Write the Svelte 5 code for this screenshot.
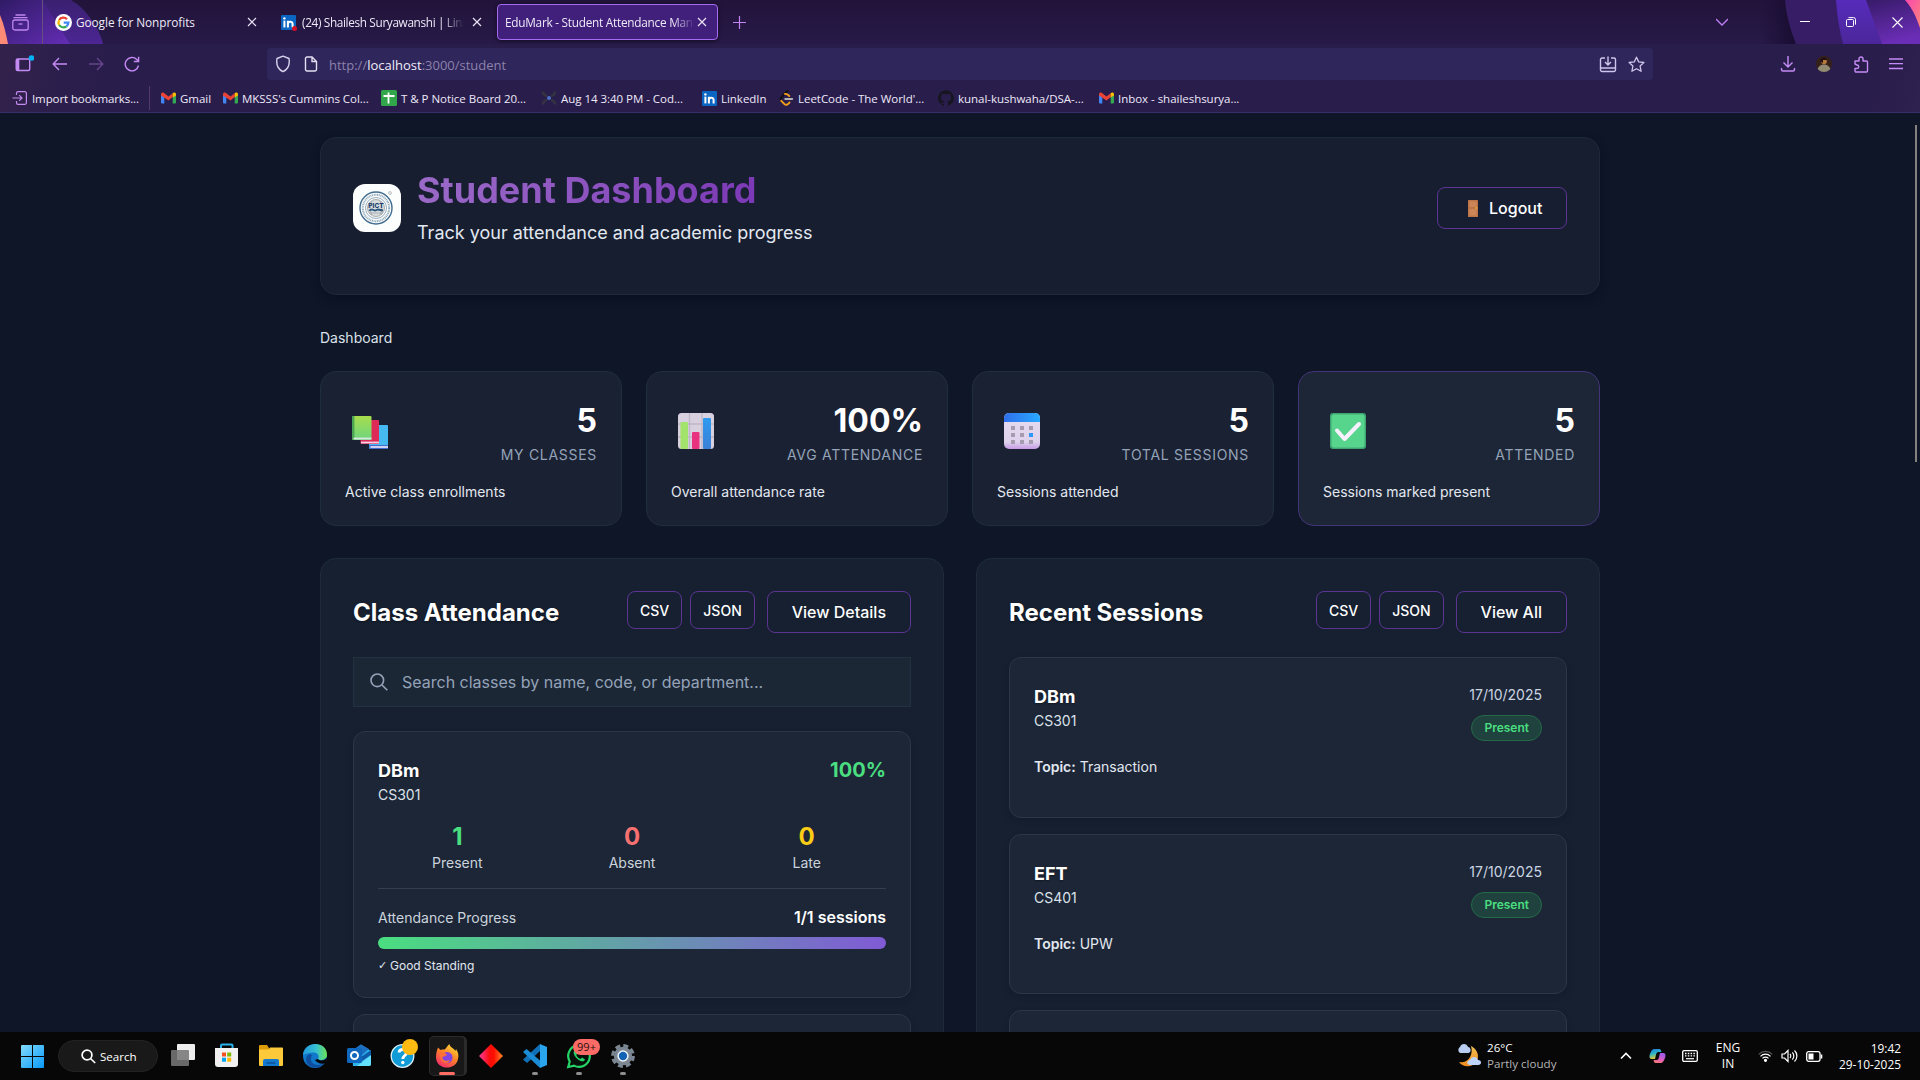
<script>
  const bookmarks = [
    { icon: 'import', label: 'Import bookmarks...', width: 137 },
    { icon: 'gmail', label: 'Gmail', width: 62 },
    { icon: 'gmail', label: "MKSSS's Cummins Col...", width: 159 },
    { icon: 'sheet', label: 'T & P Notice Board 20...', width: 160 },
    { icon: 'code', label: 'Aug 14 3:40 PM - Cod...', width: 160 },
    { icon: 'linkedin', label: 'LinkedIn', width: 77 },
    { icon: 'leetcode', label: "LeetCode - The World'...", width: 160 },
    { icon: 'github', label: 'kunal-kushwaha/DSA-...', width: 160 },
    { icon: 'gmail', label: 'Inbox - shaileshsurya...', width: 160 }
  ];

  const stats = [
    { icon: 'books', value: '5', label: 'My Classes', note: 'Active class enrollments' },
    { icon: 'chart', value: '100%', label: 'Avg Attendance', note: 'Overall attendance rate' },
    { icon: 'calendar', value: '5', label: 'Total Sessions', note: 'Sessions attended' },
    { icon: 'check', value: '5', label: 'Attended', note: 'Sessions marked present', active: true }
  ];

  const counts = [
    { value: 1, label: 'Present', tone: 'green' },
    { value: 0, label: 'Absent', tone: 'red' },
    { value: 0, label: 'Late', tone: 'yellow' }
  ];

  const sessions = [
    { name: 'DBm', code: 'CS301', date: '17/10/2025', status: 'Present', topic: 'Transaction' },
    { name: 'EFT', code: 'CS401', date: '17/10/2025', status: 'Present', topic: 'UPW' }
  ];

  const apps = ['taskview', 'store', 'explorer', 'edge', 'outlook', 'help', 'firefox', 'diamond', 'vscode', 'whatsapp', 'settings'];
  const running = ['vscode', 'whatsapp', 'settings'];
</script>

{#snippet closeIcon()}
  <svg class="close" width="10" height="10" viewBox="0 0 10 10"><path d="M1 1l8 8M9 1l-8 8" stroke="#e9e3f5" stroke-width="1.2" fill="none" /></svg>
{/snippet}

{#snippet linkedinLogo()}
  <svg width="15" height="15" viewBox="0 0 15 15">
    <rect width="15" height="15" rx="1" fill="#0a66c2" />
    <rect x="2.4" y="5.6" width="2" height="6.8" fill="#fff" /><circle cx="3.4" cy="3.4" r="1.2" fill="#fff" />
    <path d="M6.9 12.4V5.7M6.9 9c0-3 4.7-3.2 4.7 0v3.4" stroke="#fff" stroke-width="2" fill="none" />
  </svg>
{/snippet}

{#snippet bookmarkIcon(name)}
  {#if name === 'import'}
    <svg width="16" height="16" viewBox="0 0 16 16" fill="none" stroke="#c38bf0" stroke-width="1.2"><path d="M4.5 5V3.2a1.6 1.6 0 0 1 1.6-1.6h6.7a1.6 1.6 0 0 1 1.6 1.6v9.6a1.6 1.6 0 0 1-1.6 1.6H6.1a1.6 1.6 0 0 1-1.6-1.6V11M.5 8H10M7.2 5.2L10 8l-2.8 2.8" /></svg>
  {:else if name === 'gmail'}
    <svg width="15" height="12" viewBox="0 0 15 12">
      <path d="M0 2v8.5A1 1 0 0 0 1 11.5h2.3V5z" fill="#4285f4" /><path d="M15 2v8.5a1 1 0 0 1-1 1h-2.3V5z" fill="#34a853" />
      <path d="M0 2.2C0 .4 2 0 3 .9L7.5 4.6 11.7 1.2v3.9L7.5 8.5 0 3.4z" fill="#ea4335" /><path d="M11.7 1.1C13 0 15 .3 15 2.2v1.2l-3.3 2z" fill="#fbbc04" />
    </svg>
  {:else if name === 'sheet'}
    <svg width="16" height="16" viewBox="0 0 16 16"><rect width="16" height="16" rx="1.5" fill="#31a64b" /><path d="M2.5 6h11M7.5 2.5v11" stroke="#fff" stroke-width="1.8" /></svg>
  {:else if name === 'code'}
    <svg width="16" height="16" viewBox="0 0 16 16"><path d="M2 1.5C2 5 4 5.5 6 6M14 1.5C14 5 12 5.5 10 6M2 14.5C2 11 4 10.5 6 10M14 14.5C14 11 12 10.5 10 10" stroke="#343341" stroke-width="2.6" fill="none" /><circle cx="8" cy="8" r="2" fill="#4c6fc4" /></svg>
  {:else if name === 'linkedin'}
    {@render linkedinLogo()}
  {:else if name === 'leetcode'}
    <svg width="15" height="16" viewBox="0 0 15 16" fill="none" stroke-width="1.9" stroke-linecap="round"><path d="M8.5 1L2.3 7.3c-1 1.100-1 2.200 0 3.300" stroke="#111" /><path d="M2.300 10.800l2.900 3c1.300 1.300 2.700 1.300 4 0l1.300-1.300M6 4c1.500-.5 2.500.2 4.300 2" stroke="#f2a01b" /><path d="M6.200 9h7" stroke="#b3b3b3" /></svg>
  {:else}
    <svg width="16" height="16" viewBox="0 0 16 16"><path fill="#17151f" d="M8 .2a8 8 0 0 0-2.500 15.600c.4.1.5-.2.5-.4v-1.500c-2.200.5-2.700-1-2.700-1-.4-.9-.9-1.200-.9-1.200-.7-.5.1-.5.1-.5.8.1 1.200.8 1.200.8.7 1.300 1.900.9 2.300.7.1-.5.3-.9.5-1.100-1.800-.2-3.600-.9-3.600-4 0-.9.3-1.600.8-2.100-.1-.2-.4-1 .1-2.100 0 0 .7-.2 2.200.8a7.500 7.500 0 0 1 4 0c1.500-1 2.200-.8 2.200-.8.4 1.100.2 1.900.1 2.100.5.6.8 1.300.8 2.100 0 3.100-1.900 3.700-3.700 3.900.3.3.6.8.6 1.500v2.300c0 .2.1.5.6.4A8 8 0 0 0 8 .2z" /></svg>
  {/if}
{/snippet}

{#snippet statIcon(name)}
  <svg class="stat-icon" width="36" height="36" viewBox="0 0 36 36">
    <defs>
      <linearGradient id="bookGreen" x2="0" y2="1"><stop stop-color="#a8dc4c" /><stop offset="1" stop-color="#6cd77f" /></linearGradient>
      <linearGradient id="barBlue" x2="0" y2="1"><stop stop-color="#2d9bf0" /><stop offset="1" stop-color="#3d7fd6" /></linearGradient>
      <linearGradient id="calTop" x2="1"><stop stop-color="#2f6fea" /><stop offset="1" stop-color="#2aa9ff" /></linearGradient>
      <linearGradient id="calBody" x2="0" y2="1"><stop stop-color="#e6dcf0" /><stop offset=".8" stop-color="#ded2ec" /><stop offset="1" stop-color="#c79be6" /></linearGradient>
    </defs>
    {#if name === 'books'}
      <rect x="17" y="12" width="19" height="24" rx="1" fill="#46b9f1" /><path d="M17 32h19v4H18z" fill="#3f6fce" /><path d="M18.5 34H36" stroke="#e3dcf4" stroke-width="1.8" />
      <rect x="8.5" y="7" width="18.5" height="24" rx="1" fill="#de2a57" /><path d="M9 29.5h18" stroke="#f0d3e6" stroke-width="1.8" />
      <rect x="0" y="3" width="19.5" height="24" rx="1" fill="url(#bookGreen)" /><path d="M1.2 3v24" stroke="#4ca554" stroke-width="2.4" /><path d="M1.5 25.5h18" stroke="#dce5e2" stroke-width="1.8" />
    {:else if name === 'chart'}
      <rect width="36" height="36" rx="3.5" fill="#d8d0df" /><path d="M11.5 0v36M24 0v36M0 11h36M0 24h36" stroke="#beb6c6" stroke-width="1.3" />
      <rect x="2.5" y="9" width="7.5" height="27" rx="1" fill="#a1e36b" /><rect x="14" y="19" width="7.5" height="17" rx="1" fill="#e83280" /><rect x="25" y="5" width="8" height="31" rx="1" fill="url(#barBlue)" />
    {:else if name === 'calendar'}
      <rect width="36" height="36" rx="5" fill="url(#calBody)" /><path d="M0 9V5a5 5 0 0 1 5-5h26a5 5 0 0 1 5 5v4z" fill="url(#calTop)" />
      <path d="M7 15h4M16 15h4M25 15h4M7 22h4M16 22h4M7 29h4M16 29h4M25 29h4" stroke="#a69caf" stroke-width="4" /><path d="M25 22h4" stroke="#2e96f5" stroke-width="4" />
    {:else}
      <rect width="36" height="36" rx="3" fill="#3fa672" /><rect x="1.5" y="1.5" width="33" height="33" rx="2.5" fill="#58d58d" /><path d="M7 17.5l7.500 8.500L29 11" fill="none" stroke="#f9f0ff" stroke-width="4" stroke-linecap="round" stroke-linejoin="round" />
    {/if}
  </svg>
{/snippet}

{#snippet appIcon(name)}
  <svg width="26" height="26" viewBox="0 0 26 26">
    {#if name === 'taskview'}
      <rect x="7" y="1" width="18" height="16" rx="1" fill="#eee" /><rect x="1" y="7" width="18" height="16" rx="1" fill="#777" fill-opacity=".88" />
    {:else if name === 'store'}
      <path d="M7 6V2.500a1 1 0 0 1 1-1h9.500a1 1 0 0 1 1 1V6" fill="none" stroke="#28b2ec" stroke-width="2" /><path d="M1 5h23v16a3 3 0 0 1-3 3H4a3 3 0 0 1-3-3z" fill="#f1f1f1" />
      <path d="M8 9.500h4v4H8z" fill="#f25022" /><path d="M13.200 9.500h4v4h-4z" fill="#7fba00" /><path d="M8 14.700h4v4H8z" fill="#00a4ef" /><path d="M13.200 14.700h4v4h-4z" fill="#ffb900" />
    {:else if name === 'explorer'}
      <path d="M1 3a1 1 0 0 1 1-1h7l2 3v4H1z" fill="#dd9b09" /><path d="M1 6.500h9.500L12 4.500h12a1 1 0 0 1 1 1V22a1 1 0 0 1-1 1H2a1 1 0 0 1-1-1z" fill="#fcc93b" /><path d="M5 23v-5a2 2 0 0 1 2-2h12a2 2 0 0 1 2 2v5z" fill="#1279cf" /><path d="M8.500 20h9" stroke="#0b5194" stroke-width="1.500" />
    {:else if name === 'edge'}
      <defs><linearGradient id="edgeTop" x2="1"><stop stop-color="#2399dd" /><stop offset=".55" stop-color="#35c1d2" /><stop offset="1" stop-color="#6bdf54" /></linearGradient></defs>
      <circle cx="13" cy="13" r="12" fill="#1276c9" /><path d="M1 12C2 -2 25-3 25 12c0 5-7 6-9 4 1.500-2 .5-6.500-4.500-6.500C6 9.500 2 12 1 12z" fill="url(#edgeTop)" /><path d="M10 12c-4 8 4 13 12 8-4 7-17 6-18-3 0-4 3-7 6-5z" fill="#0d4f9e" /><path d="M16 16c2 2.500 7 1.500 9-1.500L24 20c-4 2-9 0-11-3z" fill="#050505" />
    {:else if name === 'outlook'}
      <path d="M6 8l9-6.500L25 8v13a2 2 0 0 1-2 2H7z" fill="#2fb5ee" /><path d="M7 7l8-5.500 8 4.500-8 7z" fill="#1c6fc0" /><path d="M11 23l14-11v9a2 2 0 0 1-2 2z" fill="#64e0ff" /><path d="M15 14l10-7v5l-9 6z" fill="#0f5ba8" /><rect x="1" y="5" width="15" height="15" rx="1.500" fill="#1068be" /><circle cx="8.500" cy="12.500" r="3.500" fill="none" stroke="#fff" stroke-width="2" />
    {:else if name === 'help'}
      <circle cx="12.500" cy="13" r="11.300" fill="#109bd7" stroke="#dff2fa" stroke-width="1.300" /><path d="M9 9.500c.3-4 7.500-4 7.500 0 0 3-3.700 3-3.700 6.500" stroke="#fff" stroke-width="2.800" fill="none" /><circle cx="12.800" cy="19.500" r="1.700" fill="#fff" />
    {:else if name === 'firefox'}
      <defs><linearGradient id="foxBody" x1=".8" y1="0" x2=".2" y2="1"><stop stop-color="#ffe13a" /><stop offset=".45" stop-color="#ff8426" /><stop offset="1" stop-color="#f1286f" /></linearGradient></defs>
      <path d="M4 4.500l2.500 2.500c1.500-.6 3-.6 4-.5 2-1.500 3-4 5-5.500 0 3 4 4 6 7l.5-2c2 3 3 6 2 10C22 28 2 27.500 2 14c0-4 1-7 2-9.500z" fill="url(#foxBody)" /><circle cx="13" cy="14.500" r="5.500" fill="#8145e0" /><path d="M6 10c3-1 5 0 7 1.500-1 2-3 1.500-4.500 2.500C8 17 12 19 16 17c-2 5-11 4-10-7z" fill="#ff7139" />
    {:else if name === 'diamond'}
      <defs><linearGradient id="gem" x2="1"><stop stop-color="#ff3a9e" /><stop offset=".45" stop-color="#f80c08" /><stop offset=".62" stop-color="#ff0e00" /><stop offset="1" stop-color="#ff8b2c" /></linearGradient></defs>
      <path d="M13 1l12 12-12 12L1 13z" fill="url(#gem)" />
    {:else if name === 'vscode'}
      <path d="M18 1l7 3v18l-7 3z" fill="#2ba4ee" /><path d="M18 1v7L5 20l-4-3.500z" fill="#0f70b8" /><path d="M1 9l3.500-3L18 17.500V25z" fill="#1b8bd6" />
    {:else if name === 'whatsapp'}
      <path d="M2.200 24l1.500-5.500A10.800 10.800 0 1 1 8 22.600z" fill="#06110a" stroke="#25d366" stroke-width="2.200" /><path d="M9 7c-3 2-.5 6.500 2.500 9 3 2.500 6.500 3.500 7.500.5l-3-2-1.500 1.500c-2-.7-3.500-2.200-4.300-4L11.500 10.500 10.300 7z" fill="#25d366" />
    {:else}
      <circle cx="13" cy="13" r="9.200" fill="#7b8793" /><circle cx="13" cy="13" r="10.300" fill="none" stroke="#7b8793" stroke-width="3.200" stroke-dasharray="5 3.090" /><circle cx="13" cy="13" r="4.900" fill="#1363b5" stroke="#eef3f8" stroke-width="1.500" />
    {/if}
  </svg>
{/snippet}

<div class="screen">
  <header class="browser">
    <div class="tabs">
      <svg class="theme-art" width="1920" height="44" viewBox="0 0 1920 44">
        <defs>
          <linearGradient id="artA" x2="1" y2="1"><stop stop-color="#301b66" /><stop offset="1" stop-color="#642db5" /></linearGradient>
          <linearGradient id="artB" x2="0" y2="1"><stop stop-color="#3a2070" /><stop offset="1" stop-color="#4c2693" /></linearGradient>
          <linearGradient id="artC" x2="0" y2="1"><stop stop-color="#562bbb" /><stop offset="1" stop-color="#4b269a" /></linearGradient>
          <linearGradient id="artD" x2=".3" y2="1"><stop stop-color="#371b69" /><stop offset="1" stop-color="#6a2db5" /></linearGradient>
          <linearGradient id="artE" x2="1" y2="1"><stop stop-color="#f848ae" /><stop offset="1" stop-color="#ff847b" /></linearGradient>
          <linearGradient id="shade"><stop stop-color="#1b0c36" stop-opacity="0" /><stop offset="1" stop-color="#190d31" /></linearGradient>
        </defs>
        <path d="M0 0h71c14 8 28 27 32 44H0z" fill="url(#artB)" /><path d="M0 0h42l28 44H0z" fill="url(#artA)" /><path d="M0 15c4 9 6 19 8 29H0z" fill="#ff8b76" />
        <rect x="1760" width="35" height="44" fill="url(#shade)" /><path d="M1785 0h135v44H1796c-6-15-10-30-11-44z" fill="#361d66" /><path d="M1836 0h31l15 44h-39c-4-15-6-30-7-44z" fill="url(#artC)" /><path d="M1866 0h54v44h-38z" fill="url(#artD)" /><path d="M1905 0h15v28c-4-12-8-20-15-28z" fill="url(#artE)" />
      </svg>
      <div class="tab-lead">
        <svg width="17" height="17" viewBox="0 0 17 17" fill="none" stroke="#bd86ee" stroke-width="1.300"><path d="M3.500 1h10M1.500 3.700h14" /><rect x=".8" y="6" width="15.400" height="10" rx="2" /><path d="M6.500 10h4" /></svg>
      </div>
      <div class="tab tab-one">
        <svg width="17" height="17" viewBox="0 0 17 17"><circle cx="8.500" cy="8.500" r="8.500" fill="#fff" /><g fill="none" stroke-width="2.200"><path d="M12 5.200A5 5 0 0 0 4.200 6" stroke="#ea4335" /><path d="M4.200 6a5 5 0 0 0 0 5" stroke="#fbbc05" /><path d="M4.200 11a5 5 0 0 0 7.300 1.300" stroke="#34a853" /><path d="M11.500 12.300a5 5 0 0 0 1.900-3.600H8.700" stroke="#4285f4" /></g></svg>
        <span class="tab-title">Google for Nonprofits</span>{@render closeIcon()}
      </div>
      <div class="tab tab-two">
        {@render linkedinLogo()}<i class="alert-dot"></i>
        <span class="tab-title fade">(24) Shailesh Suryawanshi | Linke</span>{@render closeIcon()}
      </div>
      <div class="tab tab-active"><span class="tab-title fade">EduMark - Student Attendance Man</span>{@render closeIcon()}</div>
      <svg class="plus" width="13" height="13" viewBox="0 0 13 13"><path d="M0 6.500h13M6.500 0v13" stroke="#c084f5" stroke-width="1.200" /></svg>
      <div class="window-tools">
        <svg width="12" height="8" viewBox="0 0 12 8"><path d="M0 1l6 6 6-6" fill="none" stroke="#bd7df0" stroke-width="1.300" /></svg>
        <svg class="min" width="10" height="10" viewBox="0 0 10 10"><path d="M0 4.500h10" stroke="#fff" /></svg>
        <svg width="10" height="10" viewBox="0 0 10 10" fill="none" stroke="#fff"><rect x=".5" y="2.500" width="7" height="7" rx="1" /><path d="M2.500 .6h5a2 2 0 0 1 2 2v5" /></svg>
        <svg width="11" height="11" viewBox="0 0 11 11"><path d="M.5.5l10 10m0-10l-10 10" stroke="#fff" stroke-width="1.100" /></svg>
      </div>
    </div>

    <div class="nav">
      <div class="nav-left">
        <svg width="20" height="18" viewBox="0 0 20 18"><rect x="2.200" y="4" width="13.500" height="11.500" rx="1.500" fill="none" stroke="#c58bf5" stroke-width="1.400" /><path d="M3.800 4v11" stroke="#c58bf5" stroke-width="3" /><circle cx="17.500" cy="3" r="2.800" fill="#00b3f4" /></svg>
        <svg width="16" height="14" viewBox="0 0 16 14" fill="none" stroke="#c58bf5" stroke-width="1.400"><path d="M15 7H1.500M7 1L1.200 7 7 13" /></svg>
        <svg width="16" height="14" viewBox="0 0 16 14" fill="none" stroke="#65458b" stroke-width="1.400"><path d="M1 7h13.500M9 1l5.800 6L9 13" /></svg>
        <svg width="16" height="16" viewBox="0 0 16 16" fill="none" stroke="#c58bf5" stroke-width="1.400"><path d="M14.500 9.500A6.700 6.700 0 1 1 12.800 3.500L14.500 5M14.600.8v4.700H9.800" /></svg>
      </div>
      <div class="url">
        <svg width="16" height="18" viewBox="0 0 16 18" fill="none" stroke="#d9d2ec" stroke-width="1.400"><path d="M8 1.200l6 2.300c1 6-1.500 11-6 13.200C3.500 14.500 1 9.500 2 3.500z" stroke-linejoin="round" /></svg>
        <svg width="14" height="16" viewBox="0 0 14 16" fill="none" stroke="#e3def0" stroke-width="1.400"><path d="M1.500 2.500a1.500 1.500 0 0 1 1.500-1.500h5l4.500 4.500V13.500a1.500 1.500 0 0 1-1.500 1.500H3a1.500 1.500 0 0 1-1.500-1.500zM8 1v4.500h4.500" /></svg>
        <span class="address">http://<b>localhost</b>:3000/student</span>
        <svg class="install" width="18" height="17" viewBox="0 0 18 17" fill="none" stroke="#cfc5ea" stroke-width="1.400"><path d="M6 2H3a1.500 1.500 0 0 0-1.500 1.500V14A1.500 1.500 0 0 0 3 15.500h12a1.500 1.500 0 0 0 1.500-1.500V3.500A1.500 1.500 0 0 0 15 2h-3M1.500 12h15M9 .5v8M6 6l3 3 3-3" /></svg>
        <svg class="star" width="17" height="17" viewBox="0 0 17 17" fill="none" stroke="#cfc5ea" stroke-width="1.300" stroke-linejoin="round"><path d="M8.500 1.200l2.200 4.700 5.200.6-3.800 3.500 1 5.300-4.600-2.600-4.600 2.600 1-5.300L1.100 6.500l5.200-.6z" /></svg>
      </div>
      <div class="nav-right">
        <svg width="16" height="16" viewBox="0 0 16 16" fill="none" stroke="#c58bf5" stroke-width="1.400"><path d="M8 0v10.500M3.500 6.500L8 11l4.500-4.500M1.500 12v1.500a1.500 1.500 0 0 0 1.500 1.500h10a1.500 1.500 0 0 0 1.500-1.500V12" /></svg>
        <svg width="16" height="16" viewBox="0 0 16 16"><defs><clipPath id="face"><circle cx="8" cy="8" r="8" /></clipPath></defs><g clip-path="url(#face)"><rect width="16" height="16" fill="#35201a" /><circle cx="8" cy="5.500" r="2.800" fill="#b5793f" /><path d="M4 5c1-5 7-4 7-1H7v3z" fill="#221110" /><path d="M1 16c0-10 14-10 14 0z" fill="#928b73" /></g></svg>
        <svg width="16" height="17" viewBox="0 0 16 17" fill="none" stroke="#c58bf5" stroke-width="1.400" stroke-linejoin="round"><path d="M2 8V5h4V3a2 2 0 0 1 4 0v2h3.500a1 1 0 0 1 1 1v9a1 1 0 0 1-1 1H3a1 1 0 0 1-1-1v-2.500h2a1.700 1.700 0 0 0 0-3.500z" /></svg>
        <svg width="14" height="12" viewBox="0 0 14 12"><path d="M0 1h14M0 5.700h14M0 10.500h14" stroke="#c58bf5" stroke-width="1.300" /></svg>
      </div>
    </div>

    <div class="bookmarks">
      {#each bookmarks as b, i}
        <div class="bookmark" class:first={i === 0} style:width="{b.width}px"><span class="fav">{@render bookmarkIcon(b.icon)}</span><span>{b.label}</span></div>
      {/each}
    </div>
  </header>

  <main class="page">
    <div class="scroll-thumb"></div>
    <div class="container">
      <section class="hero">
        <div class="crest">
          <svg width="42" height="42" viewBox="0 0 42 42"><g fill="none"><circle cx="20" cy="21" r="16" stroke="#416c8e" stroke-width="1.400" /><circle cx="20" cy="21" r="13.200" stroke="#8ca7b8" stroke-width="2" stroke-dasharray="1 .7" /><circle cx="20" cy="21" r="10.500" stroke="#7c98ad" stroke-width=".8" /><circle cx="20" cy="21" r="8.500" fill="#d9dcdd" stroke="#a9adb0" /><path d="M13 26h14M16 14c-2 5-2 10 0 14M24 14c2 5 2 10 0 14" stroke="#999fa4" stroke-width=".7" /><path d="M13 23.500l3-1 3 1 3-1 5 1" stroke="#28557f" stroke-width="1.800" /><circle cx="34" cy="6" r="1.400" stroke="#a9adb0" stroke-width=".8" /></g><text x="20" y="21" text-anchor="middle" font-size="6.500" font-weight="800" fill="#1c3f6c" font-family="Inter, sans-serif">PICT</text></svg>
        </div>
        <div class="hero-text"><h1>Student Dashboard</h1><p>Track your attendance and academic progress</p></div>
        <button class="btn logout">
          <svg width="10" height="17" viewBox="0 0 10 17"><rect width="10" height="17" rx=".5" fill="#bd7447" /><path d="M1.500 1.500h7v5.500h-7zM1.500 9h7v6.500h-7z" fill="#ce8557" /><circle cx="8.300" cy="8" r=".9" fill="#f1a92c" /></svg>
          Logout
        </button>
      </section>

      <nav class="crumb">Dashboard</nav>

      <section class="stats">
        {#each stats as s}
          <article class="stat" class:active={s.active}>
            <div class="stat-row">
              {@render statIcon(s.icon)}
              <div class="stat-data"><div class="stat-value">{s.value}</div><div class="stat-label">{s.label}</div></div>
            </div>
            <p>{s.note}</p>
          </article>
        {/each}
      </section>

      <section class="columns">
        <article class="panel">
          <div class="panel-head"><h2>Class Attendance</h2><button class="btn small">CSV</button><button class="btn small">JSON</button><button class="btn">View Details</button></div>
          <label class="search">
            <svg width="18" height="18" viewBox="0 0 18 18" fill="none" stroke="#94a3b8" stroke-width="1.600"><circle cx="7.300" cy="7.300" r="6.300" /><path d="M12 12l5.300 5.300" /></svg>
            <span>Search classes by name, code, or department...</span>
          </label>
          <div class="card class-card">
            <div class="card-top"><div><h3>DBm</h3><div class="code">CS301</div></div><strong class="percent">100%</strong></div>
            <div class="counts">
              {#each counts as c}<div><b class={c.tone}>{c.value}</b><span>{c.label}</span></div>{/each}
            </div>
            <div class="progress-head"><span>Attendance Progress</span><b>1/1 sessions</b></div>
            <div class="bar"></div>
            <div class="standing"><span class="tick">✓</span>Good Standing</div>
          </div>
          <div class="card next"></div>
        </article>

        <article class="panel">
          <div class="panel-head"><h2>Recent Sessions</h2><button class="btn small">CSV</button><button class="btn small">JSON</button><button class="btn">View All</button></div>
          {#each sessions as s}
            <div class="card session">
              <div class="card-top"><div><h3>{s.name}</h3><div class="code">{s.code}</div></div><div class="when"><span>{s.date}</span><em>{s.status}</em></div></div>
              <p><b>Topic:</b> {s.topic}</p>
            </div>
          {/each}
          <div class="card next"></div>
        </article>
      </section>
    </div>
  </main>

  <footer class="taskbar">
    <svg class="start" width="23" height="23" viewBox="0 0 23 23"><defs><linearGradient id="win" x2="1" y2="1"><stop stop-color="#83dcff" /><stop offset="1" stop-color="#0898f7" /></linearGradient></defs><path d="M1 0h10v11H0V1a1 1 0 0 1 1-1zM12 0h10a1 1 0 0 1 1 1v10H12zM0 12h11v11H1a1 1 0 0 1-1-1zM12 12h11v10a1 1 0 0 1-1 1H12z" fill="url(#win)" /></svg>
    <div class="find"><svg width="15" height="15" viewBox="0 0 15 15" fill="none" stroke="#fff" stroke-width="1.700"><circle cx="6" cy="6" r="4.900" /><path d="M9.500 9.500l4.700 4.500" /></svg>Search</div>
    <div class="apps">
      {#each apps as a}
        <div class="app" class:current={a === 'firefox'} class:running={running.includes(a)}>
          {@render appIcon(a)}
          {#if a === 'help'}<i class="dot"></i>{/if}
          {#if a === 'whatsapp'}<i class="count">99+</i>{/if}
        </div>
      {/each}
    </div>
    <div class="weather">
      <svg width="26" height="24" viewBox="0 0 26 24"><defs><linearGradient id="moon" x2="0" y2="1"><stop stop-color="#efc050" /><stop offset="1" stop-color="#f28a1e" /></linearGradient></defs><path d="M15 2c10 5 9 18-1 20-5 1-9-1-11-4 8 2 15-6 12-16z" fill="url(#moon)" /><path d="M4 9a3.500 3.500 0 0 1 0-6c1-4 7-4 8 0 3 0 4 6 0 6z" fill="#b8cdf2" /><path d="M14 21c-4 0-3-5 0-5 1-4 7-4 8 0 4 0 4 5 0 5z" fill="#bfd4fa" /></svg>
      <div><span>26°C</span><span class="muted">Partly cloudy</span></div>
    </div>
    <div class="tray">
      <svg width="12" height="8" viewBox="0 0 12 8"><path d="M1 6.500L6 1.500l5 5" fill="none" stroke="#fff" stroke-width="1.600" /></svg>
      <svg width="17" height="16" viewBox="0 0 17 16">
        <defs><linearGradient id="copA" x2=".3" y2="1"><stop stop-color="#2474e0" /><stop offset=".5" stop-color="#27b5c8" /><stop offset="1" stop-color="#e6c734" /></linearGradient><linearGradient id="copB" x2="-.3" y2="1"><stop stop-color="#a55be6" /><stop offset=".5" stop-color="#e85fb4" /><stop offset="1" stop-color="#f8874c" /></linearGradient></defs>
        <path d="M5 1h5.500c1.200 0 1.700 1.500 2 3H9.500c-1.500 0-2 1-2.300 2L6 11H2.500C.2 11 .2 8 1 6s2-5 4-5z" fill="url(#copA)" /><path d="M12 15H6.500c-1.200 0-1.700-1.500-2-3h3c1.500 0 2-1 2.300-2L11 5h3.500c2.300 0 2.300 3 1.500 5s-2 5-4 5z" fill="url(#copB)" />
      </svg>
      <svg width="16" height="12" viewBox="0 0 16 12"><rect x=".7" y=".7" width="14.600" height="10.600" rx="1.300" fill="none" stroke="#fff" stroke-width="1.300" /><path d="M3 3.500h10M3 5.800h10" stroke="#fff" stroke-width="1.300" stroke-dasharray="1.500 1.300" /><path d="M4 8.700h8" stroke="#fff" stroke-width="1.200" /></svg>
    </div>
    <div class="lang"><span>ENG</span><span>IN</span></div>
    <div class="status">
      <svg width="15" height="12" viewBox="0 0 15 12" fill="none" stroke="#fff" stroke-width="1.200"><path d="M.7 4.300a9.500 9.500 0 0 1 13.600 0" stroke="#555" /><path d="M2.500 6.300a7 7 0 0 1 10 0M4.500 8.400a4.200 4.200 0 0 1 6 0" /><circle cx="7.500" cy="10.300" r="1" fill="#fff" /></svg>
      <svg width="17" height="14" viewBox="0 0 17 14" fill="none" stroke="#fff" stroke-width="1.200"><path d="M1 5h2.500L7 1.500v11L3.500 9H1zM9 5c1 1 1 3 0 4M11.300 3.300c2 2 2 5.400 0 7.400M13.500 1.500c3.200 3 3.200 8 0 11" /></svg>
      <svg width="17" height="11" viewBox="0 0 17 11"><rect x=".7" y=".7" width="13.300" height="9.600" rx="2" fill="none" stroke="#fff" stroke-width="1.300" /><rect x="2.500" y="2.500" width="5" height="6" fill="#fff" /><path d="M15.500 3.500v4" stroke="#fff" stroke-width="1.600" /></svg>
    </div>
    <div class="clock"><span>19:42</span><span>29-10-2025</span></div>
  </footer>
</div>

<style>
  :global(body) { margin: 0; overflow: hidden; background: #0e1628; }
  svg { flex: none; display: block; }
  h1, h2, h3, p { margin: 0; }
  .screen { width: 1920px; height: 1080px; display: flex; flex-direction: column; overflow: hidden; font-family: Inter, sans-serif; color: #fff; }

  .browser { flex: none; height: 113px; box-sizing: border-box; border-bottom: 1px solid #3a2e6b; background: linear-gradient(100deg, #33224b 0, #2b1e4c 80px, #291d4c 120px, #291d4c 1860px, #2e204f); font-family: 'Open Sans', sans-serif; font-size: 11.8px; color: #eee9f8; }
  .tabs { position: relative; height: 44px; display: flex; align-items: center; background: linear-gradient(#211339, #271a48); }
  .theme-art { position: absolute; left: 0; top: 0; }
  .tab-lead, .tab, .plus, .window-tools { position: relative; }
  .tab-lead { width: 43px; height: 44px; box-sizing: border-box; padding-left: 12px; border-right: 1px solid #665080; display: flex; align-items: center; }
  .tab { display: flex; align-items: center; height: 36px; box-sizing: border-box; }
  .tab-one { width: 238px; padding: 0 24px 0 12px; gap: 4px; }
  .tab-two { width: 216px; padding: 0 15px 0 0; gap: 6px; }
  .tab-active { width: 221px; padding: 0 10px 0 7px; border: 1px solid #a56bf3; border-radius: 4px; background: #40207b; box-shadow: 0 1px 4px #0008; }
  .tab-title { flex: 1; min-width: 0; white-space: nowrap; overflow: hidden; letter-spacing: -.05px; }
  .tab-two .tab-title { letter-spacing: -.35px; }
  .tab-active .tab-title { letter-spacing: -.25px; }
  .fade { mask-image: linear-gradient(90deg, #000 calc(100% - 22px), transparent); }
  .alert-dot { position: absolute; left: 11px; top: 22px; width: 5px; height: 5px; border-radius: 50%; background: #d11124; }
  .close { margin-left: 2px; }
  .plus { margin-left: 15px; }
  .window-tools { margin-left: auto; padding-right: 17px; display: flex; align-items: center; gap: 36px; }
  .min { margin-left: 36px; }

  .nav { height: 40px; display: flex; align-items: center; }
  .nav-left { width: 251px; padding-left: 14px; display: flex; align-items: center; gap: 20px; }
  .nav-left svg:first-child { margin-right: -2px; }
  .url { width: 1386px; height: 32px; padding: 0 8px; margin-left: 2px; box-sizing: border-box; border-radius: 4px; background: #2f265b; display: flex; align-items: center; }
  .url svg + svg { margin-left: 13px; }
  .url .star { margin-left: 11px; }
  .address { flex: 1; margin-left: 11px; padding-top: 1px; font-size: 13px; color: #8d82ab; }
  .address b { font-weight: 400; color: #f0ecfa; }
  .nav-right { flex: 1; padding-right: 17px; display: flex; justify-content: flex-end; align-items: center; gap: 20.5px; }
  .bookmarks { height: 28px; padding-left: 12px; display: flex; align-items: center; font-size: 11.5px; }
  .bookmark { flex: none; height: 24px; display: flex; align-items: center; gap: 4px; white-space: nowrap; letter-spacing: -.03px; }
  .fav { width: 16px; display: flex; justify-content: center; }
  .first { border-right: 1px solid #543971; margin-right: 10px; letter-spacing: -.1px; }

  .page { position: relative; flex: 1; min-height: 0; overflow: hidden; padding-top: 24px; background: #0e1628; }
  .scroll-thumb { position: absolute; left: 1915px; top: 12px; width: 2px; height: 337px; background: #85817f; }
  .container { width: 1280px; margin: 0 auto; }
  .hero { height: 158px; box-sizing: border-box; padding: 0 32px 16px; border: 1px solid #1e293b; border-radius: 16px; background: #161e30; box-shadow: 0 4px 8px #080e1c88; display: flex; align-items: center; }
  .crest { width: 48px; height: 48px; border-radius: 12px; background: #fcfdfd; display: flex; align-items: center; justify-content: center; }
  .hero-text { flex: 1; margin-left: 16px; }
  h1 { width: max-content; font-size: 36px; line-height: 43px; font-weight: 700; background: linear-gradient(105deg, #9b6bc8, #8d54c0 50%, #7b38b5); -webkit-background-clip: text; background-clip: text; color: transparent; }
  .hero-text p { margin-top: 7px; margin-bottom: 1px; font-size: 18px; line-height: 27px; color: #e2e8f0; }
  .btn { height: 42px; box-sizing: border-box; padding: 0 24px; border: 1px solid #5b3494; border-radius: 8px; background: transparent; color: #fff; font: 500 16px Inter, sans-serif; display: flex; align-items: center; }
  .logout { width: 130px; gap: 11px; padding-left: 30px; padding-right: 0; background: #181e32; }
  .crumb { margin: 32px 0 22px; font-size: 14px; line-height: 22px; color: #dbe1e9; }

  .stats { display: grid; grid-template-columns: repeat(4, 1fr); gap: 24px; }
  .stat { height: 155px; box-sizing: border-box; padding: 24px; border: 1px solid #202d3e; border-radius: 16px; background: #1a2133; }
  .stat.active { background: #1c2636; border-color: #433378; }
  .stat-row { height: 70px; display: flex; align-items: center; justify-content: space-between; }
  .stat-icon { margin-left: 7px; }
  .stat-data { padding-top: 5px; text-align: right; }
  .stat-value { font-size: 32px; font-weight: 700; line-height: 38px; }
  .stat-label { margin-top: 4px; font-size: 14px; line-height: 22px; letter-spacing: .05em; text-transform: uppercase; color: #94a3b8; }
  .stat p { margin-top: 15px; font-size: 14px; line-height: 22px; color: #e2e8f0; }

  .columns { margin-top: 32px; display: grid; grid-template-columns: 1fr 1fr; gap: 32px; }
  .panel { height: 640px; box-sizing: border-box; padding: 32px; border: 1px solid #1e2b3b; border-radius: 16px; background: #162030; }
  .panel-head { height: 42px; display: flex; align-items: flex-start; margin-bottom: 24px; }
  h2 { flex: 1; font-size: 24px; line-height: 44px; font-weight: 700; text-shadow: 0 1px 2px #0006; }
  .small { height: 38px; padding: 0 12px; margin-right: 8px; font-size: 14px; }
  .small + .small { margin-right: 12px; }
  .search { height: 50px; box-sizing: border-box; padding: 0 16px; border: 1px solid #233041; background: #1c2736; display: flex; align-items: center; gap: 14px; margin-bottom: 24px; font-size: 16px; color: #94a3b8; }
  .card { box-sizing: border-box; padding: 24px; border: 1px solid #2d3646; border-radius: 12px; background: #1c2637; box-shadow: 0 3px 6px #0b132344; margin-bottom: 16px; }
  .class-card { height: 267px; }
  .next { height: 160px; }
  .card-top { height: 51px; display: flex; justify-content: space-between; }
  h3 { margin-top: 1px; font-size: 18px; line-height: 27px; font-weight: 700; text-shadow: 0 1px 2px #0006; }
  .code { font-size: 14px; line-height: 22px; color: #dbe2ea; }
  .percent { font-size: 20px; line-height: 28px; font-weight: 700; color: #4ade80; }
  .counts { margin-top: 14px; height: 67px; display: grid; grid-template-columns: repeat(3, 1fr); gap: 16px; border-bottom: 1px solid #343e4d; text-align: center; }
  .counts b { display: block; font-size: 24px; line-height: 32px; }
  .counts span { display: block; font-size: 14px; line-height: 20px; color: #cbd3dc; }
  .green { color: #4ade80; } .red { color: #f87171; } .yellow { color: #facc15; }
  .progress-head { margin-top: 15px; height: 26px; display: flex; justify-content: space-between; align-items: center; font-size: 14px; color: #cbd3dc; }
  .progress-head b { font-size: 16px; font-weight: 600; color: #fff; }
  .bar { margin-top: 7px; height: 12px; border-radius: 6px; background: linear-gradient(90deg, #4ade80, #805ad5); }
  .standing { margin-top: 8px; font-size: 12px; line-height: 18px; color: #e2e8f0; display: flex; }
  .tick { width: 12px; font-family: 'DejaVu Sans', sans-serif; font-size: 11px; }
  .session { height: 160.5px; }
  .when { display: flex; flex-direction: column; align-items: flex-end; font-size: 14px; line-height: 26px; color: #cbd5e1; }
  .when em { margin-top: 7px; height: 26px; flex: none; box-sizing: border-box; padding: 0 12px; border: 1px solid #236a47; border-radius: 13px; background: #1f423f; color: #4ade80; font: 600 12px/24px Inter, sans-serif; }
  .session p { margin-top: 23px; font-size: 14px; line-height: 22px; color: #e2e8f0; }
  .session p b { font-weight: 600; }

  .taskbar { flex: none; height: 48px; display: flex; align-items: center; background: #070707; font-family: 'Open Sans', sans-serif; font-size: 11.6px; }
  .start { margin-left: 21px; }
  .find { margin-left: 14px; width: 100px; height: 32px; box-sizing: border-box; padding-left: 22px; border-radius: 16px; border: 1px solid #222; background: #191919; display: flex; align-items: center; gap: 4px; }
  .apps { margin-left: 3px; display: flex; }
  .app { position: relative; width: 44px; height: 48px; display: flex; align-items: center; justify-content: center; }
  .current::before { content: ''; position: absolute; left: 4px; top: 4px; width: 34px; height: 38px; border: 1px solid #2b2b2b; border-right-width: 3px; border-radius: 5px; background: #181818; }
  .app svg { position: relative; }
  .current::after, .running::after { content: ''; position: absolute; left: 14px; bottom: 5px; width: 16px; height: 3px; border-radius: 2px; background: #ff6c66; }
  .running::after { left: 19px; width: 6px; background: #8d8d8d; }
  .dot { position: absolute; left: 21px; top: 7px; width: 16px; height: 16px; border-radius: 50%; background: #fdba12; }
  .count { position: absolute; left: 16px; top: 7px; width: 27px; height: 16px; border-radius: 8px; background: #fc6b66; color: #241010; font-style: normal; font-size: 11px; line-height: 16px; text-align: center; }
  .weather { margin-left: 811px; width: 164px; display: flex; align-items: center; gap: 5px; }
  .weather span, .lang span, .clock span { display: block; line-height: 16px; white-space: nowrap; }
  .muted { color: #b4b4b4; }
  .tray { display: flex; align-items: center; gap: 16.5px; }
  .lang { width: 60px; text-align: center; font-size: 12px; }
  .status { display: flex; align-items: center; gap: 8px; }
  .clock { margin-left: auto; padding-right: 19px; text-align: right; font-size: 11.9px; }
</style>
